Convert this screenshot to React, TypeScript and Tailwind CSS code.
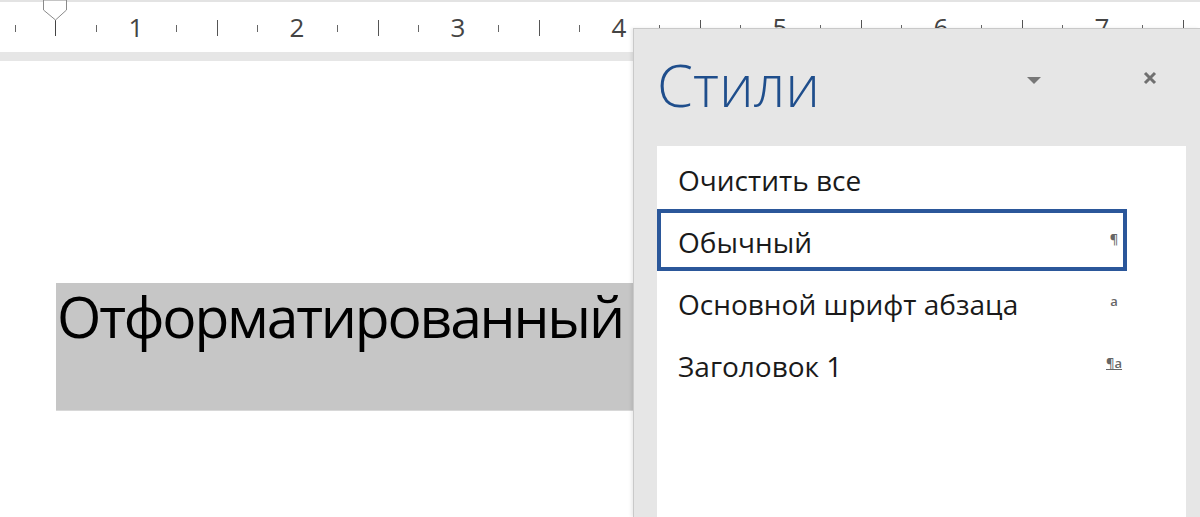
import React from 'react';

const numbers = [1, 2, 3, 4, 5, 6, 7];

function Ruler() {
  // one unit = 161px, ticks every quarter
  const ticks: { x: number; big: boolean }[] = [];
  for (let i = 0; i < 8; i++) {
    const n = 136 + 161 * (i - 1);
    ticks.push({ x: n + 40, big: false });
    ticks.push({ x: n + 80.5, big: true });
    ticks.push({ x: n + 121, big: false });
  }
  return (
    <div className="relative h-[52px] w-full bg-white">
      <svg width="1200" height="52" className="absolute left-0 top-0">
        <rect x="0" y="0" width="1200" height="2" fill="#e3e3e3" />
        {ticks.map((t, i) =>
          t.x === 55.5 ? null : (
            <line
              key={i}
              x1={Math.round(t.x) + 0.5}
              x2={Math.round(t.x) + 0.5}
              y1={t.big ? 20 : 25}
              y2={t.big ? 36 : 32}
              stroke={t.big ? '#555' : '#666'}
              strokeWidth="1"
            />
          )
        )}
        <line x1="55.5" x2="55.5" y1="20" y2="36" stroke="#444" strokeWidth="1" />
        <polygon points="43.5,0 66.5,0 66.5,10 55.5,20 43.5,10" fill="#fff" stroke="#8a8a8a" strokeWidth="1" />
        {numbers.map((n) => (
          <text
            key={n}
            x={136 + 161 * (n - 1)}
            y="37"
            textAnchor="middle"
            fontSize="26"
            fill="#444"
            fontFamily="'Open Sans', sans-serif"
          >
            {n}
          </text>
        ))}
      </svg>
    </div>
  );
}

const styles = [
  { name: 'Очистить все', mark: null as React.ReactNode },
  { name: 'Обычный', mark: '¶', selected: true },
  { name: 'Основной шрифт абзаца', mark: 'a' },
  { name: 'Заголовок 1', mark: <span className="underline">¶a</span> },
];

function StylesPane() {
  return (
    <div className="absolute left-[633px] top-[28px] bottom-0 right-0 flex flex-col border-l border-t border-[#c9c9c9] bg-[#e6e6e6] shadow-[-2px_0_3px_rgba(0,0,0,0.08)]">
      <div className="flex h-[117px] shrink-0 items-start pl-[23px]">
        <div className="pt-[27px] text-[58px] font-light leading-none text-[#1f4e8c]">Стили</div>
        <div className="ml-auto flex items-center pt-[48px]">
          <svg width="14" height="8" viewBox="0 0 14 8" className="mr-[102px]">
            <polygon points="0,0 14,0 7,7" fill="#777" />
          </svg>
          <svg width="14" height="14" viewBox="0 0 14 14" className="mr-[43px] -mt-[6px]">
            <path d="M2 2 L12 12 M12 2 L2 12" stroke="#707070" strokeWidth="3" />
          </svg>
        </div>
      </div>
      <div className="mr-[14px] ml-[23px] flex-1 bg-white pt-[1px]">
        {styles.map((s) => (
          <div
            key={s.name}
            className={
              'flex h-[62px] w-[470px] items-center justify-between ' +
              (s.selected ? 'border-[4px] border-[#2b579a] pl-[17px] pr-[1px]' : 'pl-[21px] pr-[5px]')
            }
          >
            <span className="pt-[3px] text-[28px] leading-none text-[#1a1a1a]">{s.name}</span>
            <span className="w-[16px] text-center text-[13px] font-semibold text-[#666]">{s.mark}</span>
          </div>
        ))}
      </div>
    </div>
  );
}

export default function App() {
  return (
    <div className="relative h-[517px] w-[1200px] overflow-hidden bg-white font-['Open_Sans',sans-serif]">
      <Ruler />
      <div className="h-[9px] bg-[#e6e6e6]" />
      <div className="pl-[56px] pt-[222px]">
        <div className="h-[128px] w-[600px] border-b border-[#d8d8d8] bg-[#c6c6c6] pl-[1px]">
          <div className="pt-[5px] text-[57px] leading-none tracking-[-2.2px] text-black">Отформатированный</div>
        </div>
      </div>
      <StylesPane />
    </div>
  );
}
